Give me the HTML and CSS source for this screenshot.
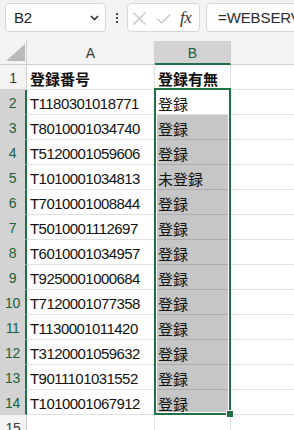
FILE: index.html
```html
<!DOCTYPE html>
<html lang="ja">
<head>
<meta charset="utf-8">
<title>Sheet</title>
<link rel="stylesheet" href="styles.css">
</head>
<body>
<div class="app">
  <div class="toolbar">
    <div class="namebox">
      <span class="name">B2</span>
      <svg class="chev" width="9" height="6" viewBox="0 0 9 6"><path d="M1 1 L4.5 4.5 L8 1" fill="none" stroke="#333" stroke-width="1.6"/></svg>
    </div>
    <div class="dots"><i></i><i></i><i></i></div>
    <div class="fxbox">
      <svg class="ico-x" width="13" height="13" viewBox="0 0 13 13"><path d="M0.5 0.5 L12.5 12.5 M12.5 0.5 L0.5 12.5" stroke="#c4c4c4" stroke-width="1.2" fill="none"/></svg>
      <svg class="ico-ok" width="14" height="10" viewBox="0 0 14 10"><path d="M0.5 5 L4.5 9 L13.5 0.5" stroke="#c4c4c4" stroke-width="1.2" fill="none"/></svg>
      <span class="fx">fx</span>
    </div>
    <div class="formula">=WEBSERV</div>
  </div>
  <div class="sheet">
    <div class="corner"><svg width="19" height="17" viewBox="0 0 19 17"><path d="M0 17 L19 17 L19 0 Z" fill="#b9b9b9"/></svg></div>
    <div class="colhead">A</div>
    <div class="colhead on">B</div>
    <div class="colhead last"></div>

    <div class="rowhead">1</div><div class="cell num hd">登録番号</div><div class="cell jp hd">登録有無</div><div class="cell last"></div>
    <div class="rowhead on">2</div><div class="cell num">T1180301018771</div><div class="cell jp active">登録</div><div class="cell last"></div>
    <div class="rowhead on">3</div><div class="cell num">T8010001034740</div><div class="cell jp sel">登録</div><div class="cell last"></div>
    <div class="rowhead on">4</div><div class="cell num">T5120001059606</div><div class="cell jp sel">登録</div><div class="cell last"></div>
    <div class="rowhead on">5</div><div class="cell num">T1010001034813</div><div class="cell jp sel">未登録</div><div class="cell last"></div>
    <div class="rowhead on">6</div><div class="cell num">T7010001008844</div><div class="cell jp sel">登録</div><div class="cell last"></div>
    <div class="rowhead on">7</div><div class="cell num">T5010001112697</div><div class="cell jp sel">登録</div><div class="cell last"></div>
    <div class="rowhead on">8</div><div class="cell num">T6010001034957</div><div class="cell jp sel">登録</div><div class="cell last"></div>
    <div class="rowhead on">9</div><div class="cell num">T9250001000684</div><div class="cell jp sel">登録</div><div class="cell last"></div>
    <div class="rowhead on">10</div><div class="cell num">T7120001077358</div><div class="cell jp sel">登録</div><div class="cell last"></div>
    <div class="rowhead on">11</div><div class="cell num">T1130001011420</div><div class="cell jp sel">登録</div><div class="cell last"></div>
    <div class="rowhead on">12</div><div class="cell num">T3120001059632</div><div class="cell jp sel">登録</div><div class="cell last"></div>
    <div class="rowhead on">13</div><div class="cell num">T9011101031552</div><div class="cell jp sel">登録</div><div class="cell last"></div>
    <div class="rowhead on">14</div><div class="cell num">T1010001067912</div><div class="cell jp sel">登録</div><div class="cell last"></div>
    <div class="rowhead">15</div><div class="cell num"></div><div class="cell jp"></div><div class="cell last"></div>

    <div class="selection"><div class="handle"></div></div>
  </div>
</div>
</body>
</html>
```
FILE: styles.css
```css
html, body {
  margin: 0;
  padding: 0;
  background: #ffffff;
  overflow: hidden;
}
body {
  width: 294px;
  height: 430px;
  font-family: "Liberation Sans", "Noto Sans CJK JP", sans-serif;
}
.app {
  width: 294px;
  height: 430px;
  overflow: hidden;
}
.toolbar {
  display: flex;
  align-items: flex-start;
  height: 41px;
  box-sizing: border-box;
  padding-top: 3px;
  padding-left: 5px;
  background: #f3f3f3;
  white-space: nowrap;
}
.namebox, .fxbox, .formula {
  height: 29px;
  box-sizing: border-box;
  background: #ffffff;
  border: 1px solid #d6d6d6;
  border-radius: 4px;
  flex: none;
}
.namebox {
  width: 101px;
  display: flex;
  align-items: center;
  justify-content: space-between;
  padding: 0 6px 0 8px;
}
.name {
  font-size: 15px;
  color: #222;
  letter-spacing: -0.3px;
}
.chev {
  display: block;
}
.dots {
  width: 21px;
  height: 29px;
  display: flex;
  flex-direction: column;
  align-items: center;
  justify-content: center;
  gap: 2px;
  flex: none;
}
.dots i {
  display: block;
  width: 2px;
  height: 2px;
  background: #444;
}
.fxbox {
  width: 73px;
  display: flex;
  align-items: center;
  padding-left: 5px;
}
.ico-x {
  display: block;
  margin-top: 1px;
}
.ico-ok {
  display: block;
  margin-left: 11px;
  margin-top: 2px;
}
.fx {
  margin-left: 9px;
  font-family: "Liberation Serif", serif;
  font-style: italic;
  font-size: 17px;
  color: #333;
  letter-spacing: -0.5px;
}
.formula {
  margin-left: 6px;
  width: 120px;
  padding-left: 11px;
  font-size: 15px;
  line-height: 27px;
  color: #2b2b2b;
  letter-spacing: -0.1px;
}

.sheet {
  position: relative;
  display: grid;
  grid-template-columns: 27px 128px 76px 1fr;
  grid-template-rows: 24px repeat(15, 25px);
  background: #ffffff;
}
.corner, .colhead, .rowhead {
  background: #f3f3f3;
  box-sizing: border-box;
  border-right: 1px solid #cfcfcf;
  border-bottom: 1px solid #cfcfcf;
  color: #3a3a3a;
  font-size: 14px;
}
.corner {
  display: flex;
  align-items: flex-end;
  justify-content: flex-end;
  padding: 0 1px 3px 0;
}
.corner svg {
  display: block;
}
.colhead {
  display: flex;
  align-items: center;
  justify-content: center;
  padding-top: 1px;
}
.colhead.on {
  background: #d3d3d3;
  border-bottom: 2px solid #1e7145;
  color: #1b5e38;
}
.colhead.last {
  border-right: none;
}
.rowhead {
  display: flex;
  align-items: center;
  justify-content: center;
  padding-top: 2px;
  letter-spacing: -0.4px;
}
.rowhead.on {
  background: #d3d3d3;
  border-right: 2px solid #1e7145;
  color: #1b5e38;
}
.cell {
  box-sizing: border-box;
  border-right: 1px solid #e1e1e1;
  border-bottom: 1px solid #e1e1e1;
  font-size: 15px;
  color: #111;
  display: flex;
  align-items: center;
  padding: 2px 0 0 3px;
  white-space: nowrap;
  overflow: hidden;
}
.cell.num {
  letter-spacing: -0.55px;
}
.cell.jp {
  font-family: "Noto Sans CJK JP", sans-serif;
  padding-left: 3px;
}
.cell.hd {
  font-family: "Noto Sans CJK JP", sans-serif;
  font-weight: 700;
  letter-spacing: 0;
}
.cell.sel {
  background: #c6c6c6;
  border-bottom-color: #adadad;
}
.cell.last {
  border-right: none;
}
.selection {
  position: absolute;
  left: 154px;
  top: 47px;
  width: 77px;
  height: 327px;
  box-sizing: border-box;
  border: 2px solid #1e7145;
  box-shadow: inset 0 0 0 1px #ffffff;
  pointer-events: none;
}
.handle {
  position: absolute;
  right: -5px;
  bottom: -5px;
  width: 8px;
  height: 8px;
  box-sizing: border-box;
  background: #1e7145;
  border: 1px solid #ffffff;
}
```
